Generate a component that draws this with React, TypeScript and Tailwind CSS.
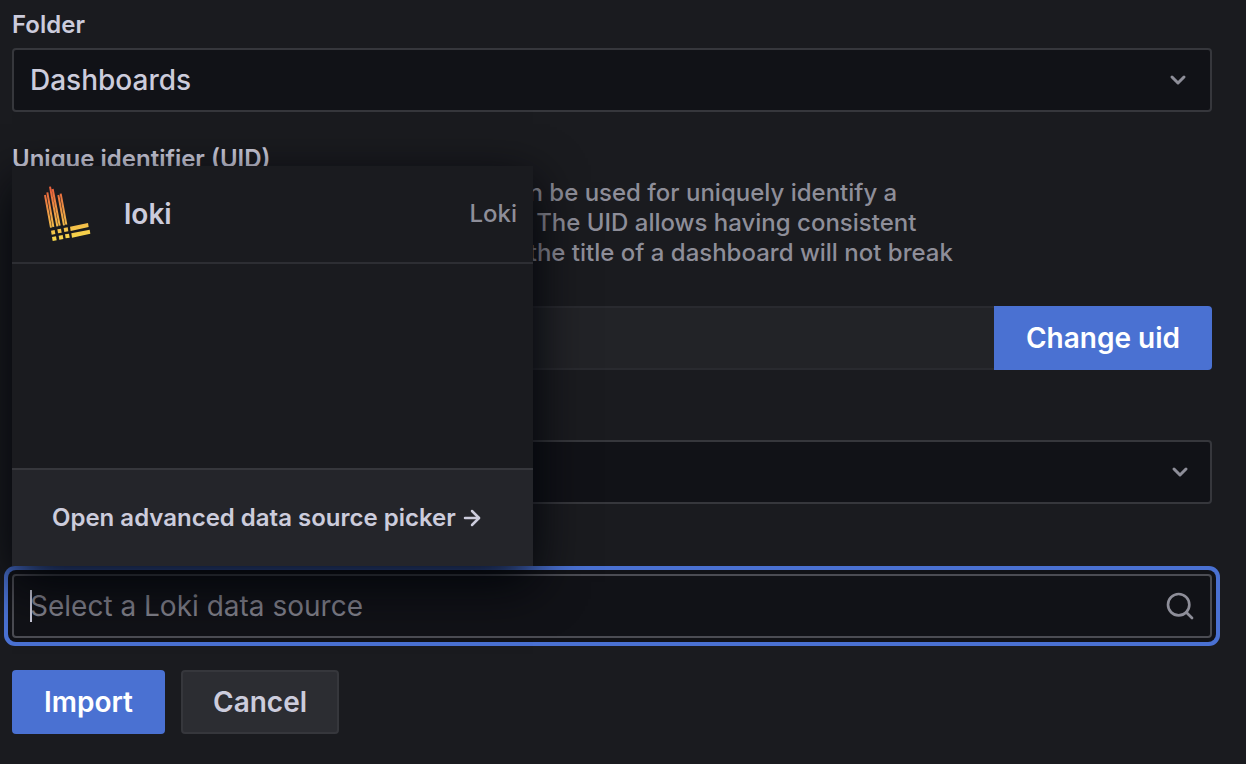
import React, { useState } from "react";
import { ArrowRight, ChevronDown, Search } from "lucide-react";

const labelClass = "block text-2xl leading-[30px] font-semibold text-[#ccccdc]";
const selectClass =
  "block h-16 w-full appearance-none rounded-sm border-2 border-[#36373c] bg-[#111217] px-4 text-[28px] text-[#ccccdc] outline-none";

function LokiLogo() {
  return (
    <svg className="h-14 w-12" viewBox="45 36 144 168" aria-hidden="true">
      <defs>
        <linearGradient
          id="loki"
          gradientUnits="userSpaceOnUse"
          x1="105"
          y1="40"
          x2="125"
          y2="200"
        >
          <stop offset="0" stopColor="#e8613b" />
          <stop offset="0.5" stopColor="#efa347" />
          <stop offset="1" stopColor="#f7dc4b" />
        </linearGradient>
      </defs>
      <g stroke="url(#loki)" strokeWidth="6" fill="none">
        <path d="M48 63L66 161M55 55L73 159" />
        <path d="M63 38L85 157M71 45L92 155" />
        <path d="M88 63L105 154M95 59L112 152" />
      </g>
      <g fill="url(#loki)">
        <path d="M66 170l11-2 2 12-11 2z" />
        <path d="M85 166l11-2 2 12-11 2z" />
        <path d="M104 162l12-2 2 12-12 2z" />
        <path d="M123 158l54-11 2 12-54 12z" />
        <path d="M69 189l12-2 2 12-12 2z" />
        <path d="M89 185l12-2 2 12-12 2z" />
        <path d="M108 181l12-2 2 12-12 2z" />
        <path d="M127 178l55-11 2 12-55 12z" />
      </g>
    </svg>
  );
}

function DataSourceMenu() {
  return (
    <div className="absolute bottom-full left-0 z-10 mb-2 flex h-[400px] w-[521px] flex-col bg-[#1a1b1f] shadow-[0_16px_48px_rgb(1,4,9)]">
      <button
        type="button"
        className="flex h-[98px] w-full items-center border-b-2 border-[#2d2e33] pr-4 pl-8 text-left"
      >
        <LokiLogo />
        <span className="ml-8 text-[28px] font-semibold text-[#ccccdc]">loki</span>
        <span className="ml-auto text-2xl font-medium text-[#8e8e99]">Loki</span>
      </button>
      <div className="flex-auto" />
      <button
        type="button"
        className="flex h-[98px] w-full items-center gap-1 border-t-2 border-[#36373c] bg-[#24252a] px-10 text-2xl font-semibold text-[#ccccdc]"
      >
        Open advanced data source picker
        <ArrowRight className="h-6 w-6" strokeWidth={2.5} />
      </button>
    </div>
  );
}

function ImportDashboard() {
  const [folder, setFolder] = useState("Dashboards");
  const [search, setSearch] = useState("");

  return (
    <div className="min-h-screen bg-[#1a1b1f] font-[Inter,sans-serif] text-[#ccccdc]">
      <form className="flex flex-col gap-8 pt-2.5 pr-[34px] pb-[30px] pl-3">
        <div>
          <label htmlFor="folder" className={labelClass}>
            Folder
          </label>
          <div className="relative mt-2">
            <select
              id="folder"
              className={`${selectClass} font-medium`}
              value={folder}
              onChange={(e) => setFolder(e.target.value)}
            >
              <option>Dashboards</option>
            </select>
            <ChevronDown className="pointer-events-none absolute top-5 right-[22px] h-6 w-6 text-[#8e8e99]" strokeWidth={3} />
          </div>
        </div>

        <div>
          <label htmlFor="uid" className={labelClass}>
            Unique identifier (UID)
          </label>
          <p className="mt-1 max-w-[960px] text-2xl leading-[30px] font-medium text-[#8e8e99]">
            The unique identifier (UID) of a dashboard can be used for uniquely identify a
            dashboard between multiple Grafana installs. The UID allows having consistent
            URLs for accessing dashboards so changing the title of a dashboard will not break
            any bookmarked links to that dashboard.
          </p>
          <div className="mt-2 flex">
            <input
              id="uid"
              disabled
              className="h-16 min-w-0 flex-auto rounded-l-sm border-2 border-r-0 border-[#292a2f] bg-[#222327] px-4 text-[28px]"
            />
            <button
              type="button"
              className="h-16 rounded-r-sm bg-[#4a71d2] px-8 text-[28px] font-semibold text-white"
            >
              Change uid
            </button>
          </div>
        </div>

        <div>
          <label htmlFor="prometheus" className={labelClass}>
            Prometheus
          </label>
          <div className="relative mt-2">
            <select id="prometheus" className={selectClass} />
            <ChevronDown className="pointer-events-none absolute top-5 right-5 h-6 w-6 text-[#8e8e99]" strokeWidth={3} />
          </div>
        </div>

        <div>
          <label htmlFor="loki-source" className={labelClass}>
            Loki
          </label>
          <div className="relative mt-2">
            <input
              id="loki-source"
              value={search}
              onChange={(e) => setSearch(e.target.value)}
              placeholder="Select a Loki data source"
              className="block h-16 w-full rounded-sm border-2 border-[#4b4c53] bg-[#111217] px-4 text-[28px] outline-none shadow-[0_0_0_4px_#111217,0_0_0_8px_#4a71d2] placeholder:text-[#80808b]"
            />
            <span className="absolute top-4 left-[18px] h-8 w-0.5 bg-[#ccccdc]" />
            <Search className="pointer-events-none absolute top-4 right-4 h-8 w-8 text-[#8e8e99]" strokeWidth={2} />
            <DataSourceMenu />
          </div>
        </div>

        <div className="flex gap-4">
          <button
            type="button"
            className="h-16 rounded-sm bg-[#4a71d2] px-8 text-[28px] font-semibold text-white"
          >
            Import
          </button>
          <button
            type="button"
            className="h-16 rounded-sm border-2 border-[#36373c] bg-[#2c2d32] px-[30px] text-[28px] font-semibold text-[#ccccdc]"
          >
            Cancel
          </button>
        </div>
      </form>
    </div>
  );
}

export default ImportDashboard;
